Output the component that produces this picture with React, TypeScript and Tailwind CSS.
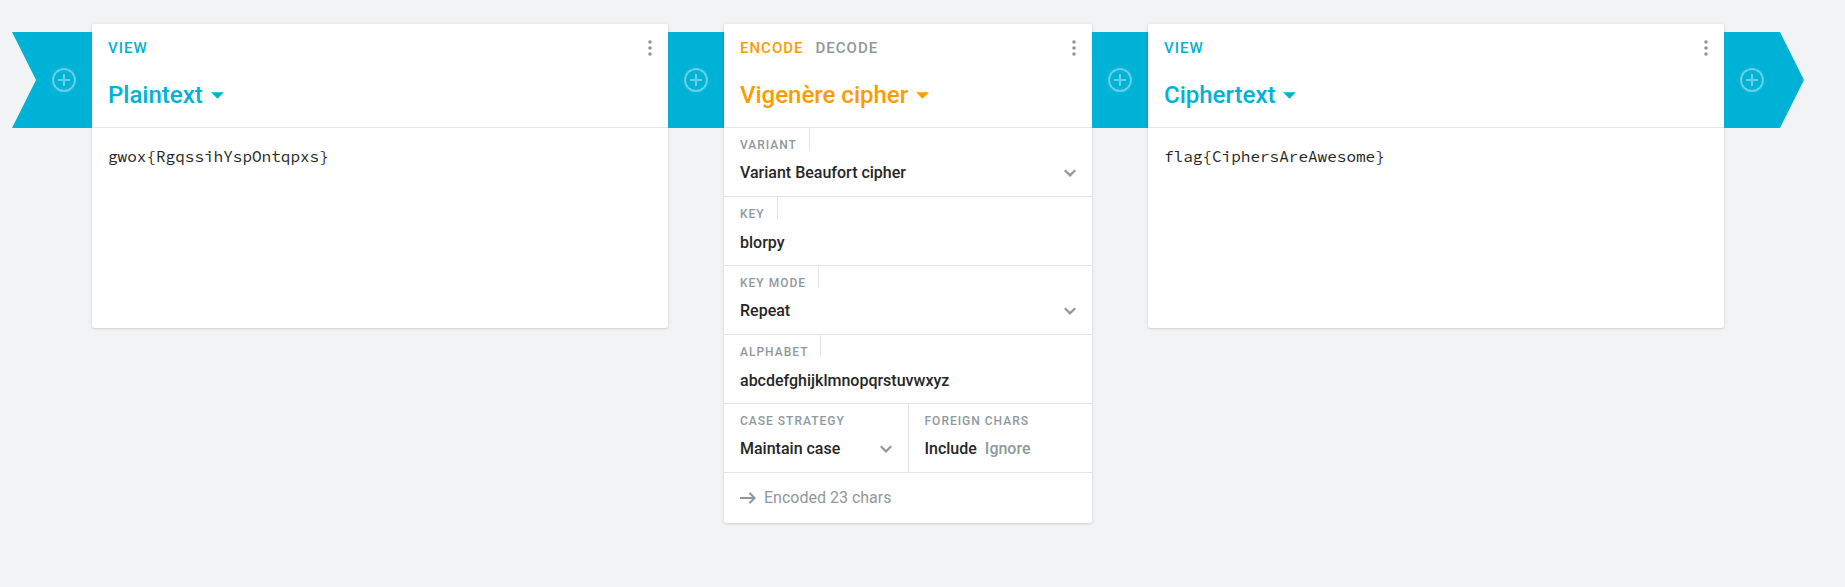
import { useId, useState } from 'react';
import type { ReactNode } from 'react';

function AddButton({ label }: { label: string }) {
  return (
    <button
      type="button"
      aria-label={label}
      className="flex h-24 w-14 items-center justify-center text-white/40 hover:text-white"
    >
      <svg width="24" height="24" viewBox="0 0 24 24" fill="none" stroke="currentColor" strokeWidth="2">
        <circle cx="12" cy="12" r="11" />
        <path d="M12 6v12M6 12h5M13 12h5" />
      </svg>
    </button>
  );
}

function MenuButton() {
  return (
    <button type="button" aria-label="More options" className="flex h-6 w-4 items-center justify-end text-[#8f989e]">
      <svg width="4" height="16" viewBox="0 0 4 16" fill="currentColor">
        <circle cx="2" cy="2" r="1.8" />
        <circle cx="2" cy="8" r="1.8" />
        <circle cx="2" cy="14" r="1.8" />
      </svg>
    </button>
  );
}

function Chevron() {
  return (
    <svg
      aria-hidden="true"
      className="pointer-events-none col-start-1 row-start-1 self-center justify-self-end text-[#8f989e]"
      width="12"
      height="8"
      viewBox="0 0 12 8"
      fill="none"
      stroke="currentColor"
      strokeWidth="2.2"
    >
      <path d="M0.8 1.2L6 6.4l5.2-5.2" />
    </svg>
  );
}

type BrickProps = {
  title: string;
  modes: string[];
  accent: string;
  className: string;
  children: ReactNode;
};

function Brick({ title, modes, accent, className, children }: BrickProps) {
  return (
    <section
      className={`flex flex-col rounded-xs bg-white shadow-[0_1px_2px_rgba(0,0,0,0.1),0_0_4px_rgba(0,0,0,0.08)] ${className}`}
    >
      <header className="flex h-26 flex-col border-b border-[#e3e7ea] px-4 pt-3">
        <div className="flex items-center justify-between">
          <div className="flex gap-3 text-[15px] leading-6 font-medium tracking-[1px] uppercase">
            {modes.map((mode, i) => (
              <button type="button" key={mode} className={`uppercase ${i === 0 ? accent : 'text-[#8f989e]'}`}>
                {mode}
              </button>
            ))}
          </div>
          <MenuButton />
        </div>
        <h2 className="mt-5 flex">
          <button type="button" className={`flex items-center gap-2 text-2xl leading-[30px] font-medium ${accent}`}>
            {title}
            <svg width="13" height="7" viewBox="0 0 13 7" fill="currentColor" aria-hidden="true">
              <path d="M0 0.3h13L6.5 6.8z" />
            </svg>
          </button>
        </h2>
      </header>
      {children}
    </section>
  );
}

function Viewer({ label, value }: { label: string; value: string }) {
  return (
    <textarea
      aria-label={label}
      defaultValue={value}
      spellCheck={false}
      className="block h-50 w-full resize-none px-4 py-4 font-['Source_Code_Pro','Liberation_Mono',monospace] text-base text-[#262626] outline-none"
    />
  );
}

const labelClass =
  'flex h-[22px] w-fit items-end pr-3 text-xs leading-[10px] font-medium tracking-[1px] uppercase text-[#8f989e]';

function SelectField({ label, value, divider = true }: { label: string; value: string; divider?: boolean }) {
  const id = useId();
  return (
    <div className="flex-1 border-b border-[#e0e6ea] px-4 pb-[11px]">
      <label htmlFor={id} className={`${labelClass} ${divider ? 'border-r border-[#e0e6ea]' : ''}`}>
        {label}
      </label>
      <div className="mt-[11px] grid h-6">
        <select
          id={id}
          className="col-start-1 row-start-1 w-full appearance-none bg-transparent pr-6 text-base leading-6 font-medium text-[#262626] outline-none"
        >
          <option>{value}</option>
        </select>
        <Chevron />
      </div>
    </div>
  );
}

function TextField({ label, value }: { label: string; value: string }) {
  const id = useId();
  return (
    <div className="border-b border-[#e0e6ea] px-4 pb-2.5">
      <label htmlFor={id} className={`${labelClass} border-r border-[#e0e6ea]`}>
        {label}
      </label>
      <input
        id={id}
        type="text"
        defaultValue={value}
        spellCheck={false}
        className="mt-3 block h-6 w-full text-base leading-6 font-medium text-[#262626] outline-none"
      />
    </div>
  );
}

function ChoiceField({ label, options }: { label: string; options: string[] }) {
  const [selected, setSelected] = useState(options[0]);
  const name = useId();
  return (
    <fieldset className="flex-1 border-b border-l border-[#e0e6ea] px-4 pb-[11px]">
      <legend className="contents">
        <span className={labelClass}>{label}</span>
      </legend>
      <div className="mt-[11px] flex h-6 gap-2">
        {options.map((option) => (
          <label
            key={option}
            className={`relative text-base leading-6 font-medium ${option === selected ? 'text-[#262626]' : 'text-[#8f989e]'}`}
          >
            <input
              type="radio"
              name={name}
              className="sr-only"
              checked={option === selected}
              onChange={() => setSelected(option)}
            />
            {option}
          </label>
        ))}
      </div>
    </fieldset>
  );
}

export default function App() {
  return (
    <main className="flex min-h-screen items-start bg-[#f2f3f5] pt-6 pr-[41px] pb-16 pl-3 font-[Roboto,sans-serif]">
      <div className="mt-2 flex w-20 shrink-0 justify-end bg-[#00b2d5] [clip-path:polygon(0_0,100%_0,100%_100%,0_100%,24px_50%)]">
        <AddButton label="Add brick at start" />
      </div>
      <Brick title="Plaintext" modes={['View']} accent="text-[#00b2d5]" className="min-w-0 flex-1">
        <Viewer label="Plaintext" value="gwox{RgqssihYspOntqpxs}" />
      </Brick>
      <div className="mt-2 w-14 shrink-0 bg-[#00b2d5]">
        <AddButton label="Add brick before cipher" />
      </div>
      <Brick title="Vigenère cipher" modes={['Encode', 'Decode']} accent="text-[#ff9a00]" className="w-92 shrink-0">
        <SelectField label="Variant" value="Variant Beaufort cipher" />
        <TextField label="Key" value="blorpy" />
        <SelectField label="Key mode" value="Repeat" />
        <TextField label="Alphabet" value="abcdefghijklmnopqrstuvwxyz" />
        <div className="flex">
          <SelectField label="Case strategy" value="Maintain case" divider={false} />
          <ChoiceField label="Foreign chars" options={['Include', 'Ignore']} />
        </div>
        <footer className="flex items-center gap-2 px-4 py-[13px] text-base leading-6 text-[#8f989e]">
          <svg
            width="16"
            height="12"
            viewBox="0 0 16 12"
            fill="none"
            stroke="currentColor"
            strokeWidth="2"
            aria-hidden="true"
          >
            <path d="M0 6h14.5M9.4 0.8L14.6 6 9.4 11.2" />
          </svg>
          Encoded 23 chars
        </footer>
      </Brick>
      <div className="mt-2 w-14 shrink-0 bg-[#00b2d5]">
        <AddButton label="Add brick after cipher" />
      </div>
      <Brick title="Ciphertext" modes={['View']} accent="text-[#00b2d5]" className="min-w-0 flex-1">
        <Viewer label="Ciphertext" value="flag{CiphersAreAwesome}" />
      </Brick>
      <div className="mt-2 flex w-20 shrink-0 bg-[#00b2d5] [clip-path:polygon(0_0,56px_0,100%_50%,56px_100%,0_100%)]">
        <AddButton label="Add brick at end" />
      </div>
    </main>
  );
}
